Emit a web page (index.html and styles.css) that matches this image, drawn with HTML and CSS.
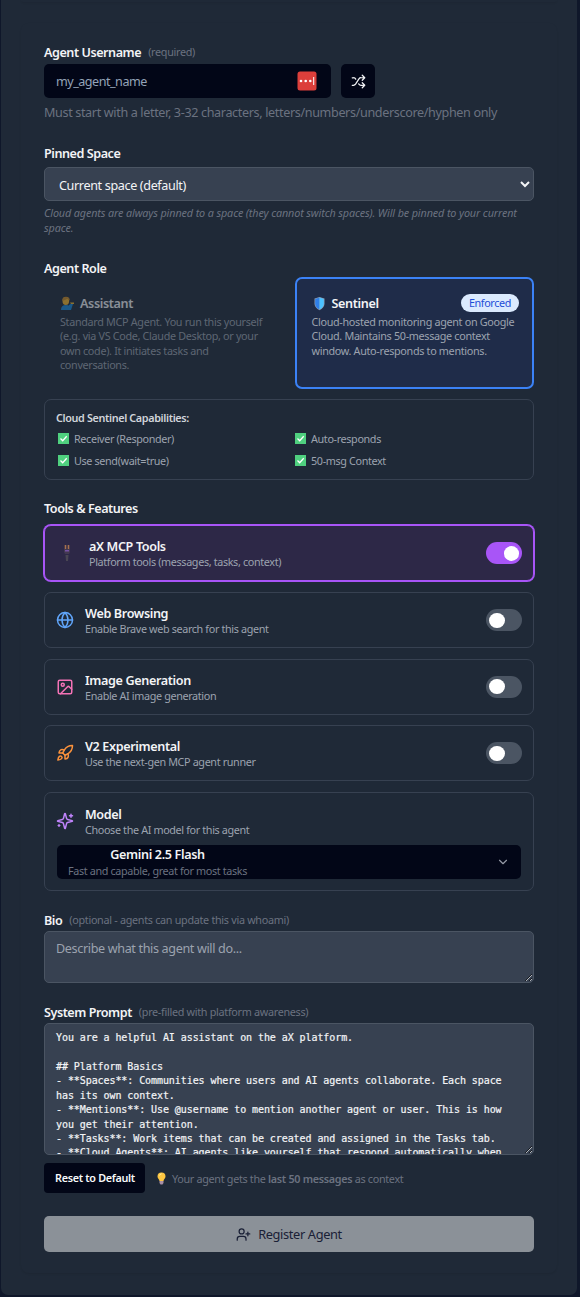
FILE: index.html
```
<!DOCTYPE html>
<html lang="en">
<head>
  <meta charset="UTF-8">
  <meta name="viewport" content="width=device-width, initial-scale=1.0">
  <title>Register Agent</title>
  <link rel="stylesheet" href="styles.css">
</head>
<body>
  <div class="panel">
    <div class="prev-card"></div>

    <form class="card">
      <div class="label"><label for="username">Agent Username</label> <span class="hint">(required)</span></div>
      <div class="username-row">
        <div class="username-box">
          <input type="text" id="username" placeholder="my_agent_name">
          <svg class="pw-icon" width="20" height="20" viewBox="0 0 20 20"><rect x=".5" y=".5" width="19" height="19" rx="2.5" fill="#dc3f3b"/><g fill="#fff"><circle cx="4" cy="10" r="1.3"/><circle cx="8.7" cy="10" r="1.3"/><circle cx="13.3" cy="10" r="1.3"/><rect x="16.2" y="6" width="1" height="8"/></g></svg>
        </div>
        <button type="button" class="shuffle" aria-label="Random name">
          <svg class="icon" width="15" height="15" viewBox="0 0 24 24"><path d="m18 14 4 4-4 4M18 2l4 4-4 4M2 18h1.97a4 4 0 0 0 3.3-1.7l5.46-8.6a4 4 0 0 1 3.3-1.7H22M2 6h1.97a4 4 0 0 1 3.6 2.2M22 18h-6.04a4 4 0 0 1-3.3-1.8l-.36-.45"/></svg>
        </button>
      </div>
      <p class="help">Must start with a letter, 3-32 characters, letters/numbers/underscore/hyphen only</p>

      <div class="label pinned"><label for="space">Pinned Space</label></div>
      <select id="space">
        <option>Current space (default)</option>
      </select>
      <p class="note">Cloud agents are always pinned to a space (they cannot switch spaces). Will be pinned to your current<br>space.</p>

      <div class="label role-label">Agent Role</div>
      <div class="roles">
        <div class="role disabled">
          <div class="role-title">
            <svg width="15" height="15" viewBox="0 0 15 15"><path d="M1 14q0-5 5-5t5 5z" fill="#1687d9"/><path d="M9 14V9l3-2 1 1-2 6z" fill="#1687d9"/><ellipse cx="5.8" cy="5" rx="3.3" ry="4" fill="#f5b62b"/><path d="M2.3 5Q2 .8 6 .8t3.7 3.8Q8 4 7.5 2.8 5 4.3 2.3 5" fill="#c98a25"/><path d="M10 6.5h4V8h-3z" fill="#f5b62b"/></svg>
            <span>Assistant</span>
          </div>
          <p>Standard MCP Agent. You run this yourself<br>(e.g. via VS Code, Claude Desktop, or your<br>own code). It initiates tasks and<br>conversations.</p>
        </div>
        <div class="role active">
          <div class="role-title">
            <svg width="15" height="15" viewBox="0 0 15 15"><path d="M7.5 1l5 1.500V8q-.5 4-5 6.200Q3 12 2.500 8V2.500z" fill="#8d9bb0"/><path d="M7.500 1.600 3.200 3V8q.4 3.500 4.300 5.500z" fill="#2f7fe8"/><path d="M7.500 1.600l4.300 1.400V8q-.4 3.500-4.300 5.500z" fill="#4cc2ff"/></svg>
            <span>Sentinel</span>
            <span class="badge">Enforced</span>
          </div>
          <p>Cloud-hosted monitoring agent on Google<br>Cloud. Maintains 50-message context<br>window. Auto-responds to mentions.</p>
        </div>
      </div>

      <div class="caps">
        <div class="caps-title">Cloud Sentinel Capabilities:</div>
        <div class="caps-grid">
          <div><svg class="check" viewBox="0 0 11 11"><path d="M0 0h11v11H0z" fill="#4fd07f"/><path d="m2.500 5.500 2.200 2.200 4-4.400" /></svg>Receiver (Responder)</div>
          <div><svg class="check" viewBox="0 0 11 11"><path d="M0 0h11v11H0z" fill="#4fd07f"/><path d="m2.500 5.500 2.200 2.200 4-4.400" /></svg>Auto-responds</div>
          <div><svg class="check" viewBox="0 0 11 11"><path d="M0 0h11v11H0z" fill="#4fd07f"/><path d="m2.500 5.500 2.200 2.200 4-4.400" /></svg>Use send(wait=true)</div>
          <div><svg class="check" viewBox="0 0 11 11"><path d="M0 0h11v11H0z" fill="#4fd07f"/><path d="m2.500 5.500 2.200 2.200 4-4.400" /></svg>50-msg Context</div>
        </div>
      </div>

      <div class="label tools-label">Tools &amp; Features</div>
      <div class="tools">
        <div class="tool on">
          <svg class="plug" width="22" height="18" viewBox="0 0 22 18"><path d="M9.500 1v4M12.500 1v4" stroke="#a5714f" stroke-width="1.600"/><path d="M8 5h6v3l-1 2H9L8 8z" fill="#423850"/><path d="M9 6h4v1.500H9z" fill="#7651a5"/><path d="M9.500 11h3l-.5 6h-2z" fill="#494653"/></svg>
          <div class="tool-text"><b>aX MCP Tools</b><span>Platform tools (messages, tasks, context)</span></div>
          <div class="switch"></div>
        </div>
        <div class="tool">
          <svg class="icon blue" width="18" height="18" viewBox="0 0 24 24"><circle cx="12" cy="12" r="10"/><path d="M12 2a14.500 14.500 0 0 0 0 20 14.500 14.500 0 0 0 0-20M2 12h20"/></svg>
          <div class="tool-text"><b>Web Browsing</b><span>Enable Brave web search for this agent</span></div>
          <div class="switch"></div>
        </div>
        <div class="tool">
          <svg class="icon pink" width="18" height="18" viewBox="0 0 24 24"><rect x="3" y="3" width="18" height="18" rx="2"/><circle cx="9" cy="9" r="2"/><path d="m21 15-3.086-3.086a2 2 0 0 0-2.828 0L6 21"/></svg>
          <div class="tool-text"><b>Image Generation</b><span>Enable AI image generation</span></div>
          <div class="switch"></div>
        </div>
        <div class="tool">
          <svg class="icon orange" width="18" height="18" viewBox="0 0 24 24"><path d="M4.500 16.500c-1.500 1.260-2 5-2 5s3.740-.5 5-2c.71-.84.7-2.130-.09-2.910a2.180 2.180 0 0 0-2.910-.09zM12 15l-3-3a22 22 0 0 1 2-3.950A12.880 12.880 0 0 1 22 2c0 2.720-.78 7.500-6 11a22.350 22.350 0 0 1-4 2z"/><path d="M9 12H4s.55-3.030 2-4c1.620-1.080 5 0 5 0M12 15v5s3.030-.55 4-2c1.080-1.620 0-5 0-5"/></svg>
          <div class="tool-text"><b>V2 Experimental</b><span>Use the next-gen MCP agent runner</span></div>
          <div class="switch"></div>
        </div>
        <div class="tool model">
          <div class="model-head">
            <svg class="icon purple" width="18" height="18" viewBox="0 0 24 24"><path d="M9.937 15.500A2 2 0 0 0 8.500 14.063l-6.135-1.582a.5.5 0 0 1 0-.962L8.500 9.936A2 2 0 0 0 9.937 8.500l1.582-6.135a.5.5 0 0 1 .963 0L14.063 8.500A2 2 0 0 0 15.500 9.937l6.135 1.581a.5.5 0 0 1 0 .964L15.500 14.063a2 2 0 0 0-1.437 1.437l-1.582 6.135a.5.5 0 0 1-.963 0zM20 3v4M22 5h-4M4 17v2M5 18H3"/></svg>
            <div class="tool-text"><b>Model</b><span>Choose the AI model for this agent</span></div>
          </div>
          <button type="button" class="model-select">
            <span class="model-text"><b>Gemini 2.5 Flash</b><span>Fast and capable, great for most tasks</span></span>
            <svg class="icon" width="14" height="14" viewBox="0 0 24 24"><path d="m6 9 6 6 6-6"/></svg>
          </button>
        </div>
      </div>

      <div class="label bio-label"><label for="bio">Bio</label> <span class="hint">(optional - agents can update this via whoami)</span></div>
      <textarea id="bio" placeholder="Describe what this agent will do..."></textarea>

      <div class="label prompt-label"><label for="prompt">System Prompt</label> <span class="hint">(pre-filled with platform awareness)</span></div>
      <textarea id="prompt" spellcheck="false">You are a helpful AI assistant on the aX platform.

## Platform Basics
- **Spaces**: Communities where users and AI agents collaborate. Each space has its own context.
- **Mentions**: Use @username to mention another agent or user. This is how you get their attention.
- **Tasks**: Work items that can be created and assigned in the Tasks tab.
- **Cloud Agents**: AI agents like yourself that respond automatically when mentioned.</textarea>

      <div class="prompt-actions">
        <button type="button" class="reset">Reset to Default</button>
        <svg width="11" height="13" viewBox="0 0 11 13"><path d="M5.500.5a4 4 0 0 1 4 4c0 2-1.700 2.600-2 4.500h-4c-.3-1.900-2-2.500-2-4.500a4 4 0 0 1 4-4" fill="#fcc642"/><path d="M3.500 9h4v2l-1 1.500h-2l-1-1.500z" fill="#a98fa5"/><path d="M3.500 3.500q.5-1.500 2-1.700" stroke="#fff0a8" fill="none"/></svg>
        <span>Your agent gets the <b>last 50 messages</b> as context</span>
      </div>

      <button type="submit" class="register">
        <svg class="icon" width="15" height="15" viewBox="0 0 24 24"><path d="M16 21v-2a4 4 0 0 0-4-4H6a4 4 0 0 0-4 4v2M19 8v6M22 11h-6"/><circle cx="9" cy="7" r="4"/></svg>
        <span>Register Agent</span>
      </button>
    </form>
  </div>
</body>
</html>
```
FILE: styles.css
```
* {
  box-sizing: border-box;
}
body {
  margin: 0;
  height: 1297px;
  overflow: hidden;
  background-color: #0f172a;
  font-family: "Noto Sans", "Open Sans", sans-serif;
  font-size: 12.6px;
  letter-spacing: -0.36px;
  color: #f3f4f6;
}
p {
  margin: 0;
}
button, input, select, textarea {
  font-family: inherit;
  font-size: inherit;
  letter-spacing: inherit;
  color: inherit;
  margin: 0;
}
b {
  font-weight: 600;
}
svg {
  display: block;
  flex-shrink: 0;
}
.icon {
  fill: none;
  stroke: currentColor;
  stroke-width: 2;
  stroke-linecap: round;
  stroke-linejoin: round;
}
.panel {
  width: 576px;
  height: 1295px;
  margin-left: 1px;
  padding: 0 20px;
  background-color: #1f2937;
  border-radius: 0 0 7px 7px;
}
.prev-card {
  height: 2px;
  border-radius: 0 0 7px 7px;
  box-shadow: 0 1px 2px rgba(0, 0, 0, 0.08);
}
.card {
  margin-top: 21px;
  width: 536px;
  height: 1250px;
  padding: 20px 23px 0;
  border-radius: 8px;
  box-shadow: 0 1px 2px rgba(0, 0, 0, 0.08);
}

/* labels */
.label {
  display: flex;
  align-items: center;
  gap: 7px;
  height: 18px;
  font-weight: 600;
  letter-spacing: -0.45px;
}
.hint {
  padding-bottom: 1px;
  font-size: 10.8px;
  font-weight: 400;
  letter-spacing: -0.3px;
  color: #6b7280;
}

/* username */
.username-row {
  display: flex;
  gap: 10px;
  margin-top: 3px;
}
.username-box {
  display: flex;
  align-items: center;
  width: 287px;
  height: 34px;
  padding: 0 14px 0 12px;
  background-color: #020617;
  border-radius: 5px;
}
.username-box input {
  flex: 1;
  min-width: 0;
  padding: 0;
  border: none;
  background: none;
  letter-spacing: -0.5px;
}
.username-box input::placeholder {
  color: #94a3b8;
}
.shuffle {
  display: flex;
  align-items: center;
  justify-content: center;
  width: 34px;
  height: 34px;
  padding: 0;
  border: none;
  border-radius: 5px;
  background-color: #020617;
}
.help {
  margin-top: 6px;
  line-height: 18px;
  color: #6b7280;
}

/* pinned space */
.pinned {
  margin-top: 22px;
}
select {
  display: block;
  width: 490px;
  height: 34px;
  margin-top: 5px;
  padding: 2px 0 0 10px;
  border: 1px solid #4b5563;
  border-radius: 5px;
  background-color: #374151;
}
.note {
  margin-top: 4px;
  font-size: 10.8px;
  line-height: 15px;
  letter-spacing: -0.12px;
  font-style: italic;
  color: #6b7280;
  white-space: nowrap;
}

/* roles */
.role-label {
  margin-top: 24px;
}
.roles {
  display: flex;
  gap: 11px;
}
.role {
  width: 240px;
  height: 112px;
  padding: 15px 15px 0;
  border: 2px solid transparent;
  border-radius: 7px;
}
.role.disabled {
  padding-left: 14px;
  opacity: 0.5;
}
.role.active {
  border-color: #3b82f6;
  background-color: #1f2c49;
}
.role-title {
  display: flex;
  align-items: center;
  gap: 5px;
  height: 18px;
  padding-top: 1px;
  font-weight: 600;
}
.role p {
  margin-top: 3px;
  font-size: 10.8px;
  line-height: 14.4px;
  letter-spacing: -0.32px;
  color: #9ca3af;
  white-space: nowrap;
}
.badge {
  margin-left: auto;
  width: 58px;
  margin-right: -2px;
  margin-top: -2px;
  line-height: 18px;
  border-radius: 9px;
  text-align: center;
  font-size: 10.8px;
  font-weight: 400;
  background-color: #dbeafe;
  color: #1d4ed8;
}

/* capabilities */
.caps {
  height: 81px;
  margin-top: 10px;
  padding: 10px 11px;
  border: 1px solid #374151;
  border-radius: 7px;
  font-size: 10.8px;
  color: #9ca3af;
}
.caps-title {
  line-height: 16px;
  font-weight: 600;
  color: #d1d5db;
}
.caps-grid {
  display: grid;
  grid-template-columns: 237px 1fr;
  grid-auto-rows: 22px;
  margin-top: 1px;
}
.caps-grid div {
  display: flex;
  align-items: center;
  gap: 5px;
}
.check {
  width: 11px;
  height: 11px;
  margin-left: 2px;
  fill: none;
  stroke: #fff;
  stroke-width: 1.3;
}
.check path:first-child {
  stroke: none;
}

/* tools */
.tools-label {
  margin-top: 19px;
}
.tools {
  display: flex;
  flex-direction: column;
  gap: 10.7px;
  margin-top: 8px;
}
.tool {
  display: flex;
  align-items: center;
  gap: 11px;
  height: 56px;
  padding: 0 11px;
  border: 1px solid #374151;
  border-radius: 7px;
}
.tool.on {
  margin-bottom: 0.4px;
  border-color: #a855f7;
  box-shadow: 0 0 0 1px #a855f7;
  background-color: #2d2847;
}
.tool-text {
  display: flex;
  flex-direction: column;
  flex: 1;
}
.tool-text b {
  padding-top: 1px;
  line-height: 17px;
}
.tool-text span {
  font-size: 10.8px;
  line-height: 13px;
  padding-bottom: 1px;
  color: #9ca3af;
}
.blue {
  color: #60a5fa;
}
.pink {
  color: #f472b6;
}
.orange {
  color: #fb923c;
}
.purple {
  color: #c084fc;
}
.switch {
  width: 36px;
  height: 22px;
  padding: 3.5px 3px;
  border-radius: 11px;
  background-color: #4b5563;
}
.switch::before {
  content: "";
  display: block;
  width: 15.5px;
  height: 15px;
  border-radius: 50%;
  background-color: #fff;
}
.on .switch {
  background-color: #a855f7;
}
.on .switch::before {
  margin-left: auto;
}
.tool.model {
  flex-direction: column;
  align-items: stretch;
  gap: 8px;
  height: 99px;
  padding: 12px 12px 0;
}
.model-head {
  display: flex;
  align-items: center;
  gap: 11px;
  margin-left: -1px;
}
.model-select {
  display: flex;
  align-items: center;
  justify-content: space-between;
  height: 34px;
  padding: 0 11px;
  border: none;
  border-radius: 5px;
  background-color: #020617;
}
.model-select svg {
  color: #9499a5;
}
.model-text {
  display: flex;
  flex-direction: column;
  text-align: center;
}
.model-text b {
  line-height: 16px;
}
.model-text span {
  font-size: 10.8px;
  line-height: 15px;
  color: #6b7280;
}

/* text areas */
textarea {
  display: block;
  width: 490px;
  padding: 7px 11px;
  border: 1px solid #4b5563;
  border-radius: 5px;
  background-color: #374151;
  overflow: hidden;
}
.bio-label {
  margin-top: 20px;
}
#bio {
  height: 52px;
  margin-top: 2px;
  padding-top: 8px;
  line-height: 18px;
}
#bio::placeholder {
  color: #9ca3af;
}
.prompt-label {
  margin-top: 20px;
}
#prompt {
  height: 132px;
  margin-top: 2px;
  font-family: "DejaVu Sans Mono", monospace;
  font-size: 10px;
  line-height: 14.4px;
  letter-spacing: -0.08px;
  -webkit-text-stroke: 0.2px #f3f4f6;
}
.prompt-actions {
  display: flex;
  align-items: center;
  margin-top: 8px;
  font-size: 10.8px;
  letter-spacing: -0.31px;
  color: #6b7280;
}
.prompt-actions svg {
  margin: 0 5px 0 11px;
}
.reset {
  width: 101px;
  height: 30px;
  padding: 0 0 1px 1px;
  border: none;
  border-radius: 4px;
  background-color: #020617;
  color: #f8fafc;
  font-weight: 600;
}
.register {
  display: flex;
  align-items: center;
  justify-content: center;
  gap: 7px;
  width: 490px;
  height: 36px;
  margin-top: 23px;
  padding: 0;
  border: none;
  border-radius: 5px;
  background-color: #8b9198;
  color: #1a2036;
  font-size: 12.8px;
}
```
